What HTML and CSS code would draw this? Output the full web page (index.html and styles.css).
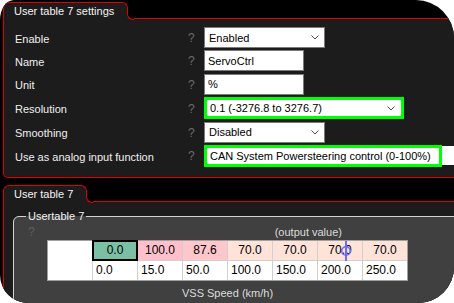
FILE: index.html
```html
<!DOCTYPE html>
<html lang="en">
<head>
  <meta charset="UTF-8" />
  <meta name="viewport" content="width=device-width, initial-scale=1.0" />
  <title>User table 7</title>
  <link rel="stylesheet" href="styles.css">
</head>
<body>
  <div class="window">

    <div class="tab">User table 7 settings</div>
    <div class="panel settings">
      <div class="row r23">
        <span class="label">Enable</span>
        <span class="help">?</span>
        <div class="combo short">Enabled <svg class="chev" width="8" height="5" viewBox="0 0 8 5"><polyline points="0.5,0.5 4,4 7.5,0.5"/></svg></div>
      </div>
      <div class="row r23">
        <span class="label">Name</span>
        <span class="help">?</span>
        <div class="field">ServoCtrl</div>
      </div>
      <div class="row r24">
        <span class="label">Unit</span>
        <span class="help">?</span>
        <div class="field">%</div>
      </div>
      <div class="row r24">
        <span class="label">Resolution</span>
        <span class="help">?</span>
        <div class="marked res">0.1 (-3276.8 to 3276.7) <svg class="chev" width="8" height="5" viewBox="0 0 8 5"><polyline points="0.5,0.5 4,4 7.5,0.5"/></svg></div>
      </div>
      <div class="row r24">
        <span class="label">Smoothing</span>
        <span class="help">?</span>
        <div class="combo short">Disabled <svg class="chev" width="8" height="5" viewBox="0 0 8 5"><polyline points="0.5,0.5 4,4 7.5,0.5"/></svg></div>
      </div>
      <div class="row r23">
        <span class="label">Use as analog input function</span>
        <span class="help">?</span>
        <div class="pair">
          <div class="marked func">CAN System Powersteering control (0-100%)</div>
          <div class="tail"></div>
        </div>
      </div>
    </div>

    <div class="tab second">User table 7</div>
    <div class="panel chart">
      <fieldset class="group">
        <legend>Usertable 7</legend>
        <div class="chart-head">
          <span class="help dim">?</span>
          <span class="axis-y">(output value)</span>
        </div>
        <div class="map">
          <div class="cell corner"></div>
          <div class="cell val sel">0.0</div>
          <div class="cell val hot">100.0</div>
          <div class="cell val hot2">87.6</div>
          <div class="cell val warm">70.0</div>
          <div class="cell val warm">70.0</div>
          <div class="cell val warm">70.0</div>
          <div class="cell val warm">70.0</div>
          <div class="cell axis">0.0</div>
          <div class="cell axis">15.0</div>
          <div class="cell axis">50.0</div>
          <div class="cell axis">100.0</div>
          <div class="cell axis">150.0</div>
          <div class="cell axis">200.0</div>
          <div class="cell axis">250.0</div>
          <!-- live value marker -->
          <svg class="marker" width="12" height="20" viewBox="0 0 12 20">
            <line x1="6" y1="0" x2="6" y2="20"/>
            <circle cx="6" cy="10" r="4.3"/>
          </svg>
        </div>
        <div class="axis-x">VSS Speed (km/h)</div>
      </fieldset>
    </div>

  </div>
</body>
</html>
```

FILE: styles.css
```css
* {
  box-sizing: border-box;
}

body {
  margin: 0;
  background: #fff;
  font-family: "Liberation Sans", Arial, sans-serif;
  font-size: 11px;
  color: #f0f0f0;
}

.window {
  width: 454px;
  height: 303px;
  overflow: hidden;
  background: #000;
  padding: 2px 0 0 3px;
  border-radius: 14px 38px 36px 28px / 20px 38px 36px 28px;
}

/* tabs */
.tab {
  position: relative;
  z-index: 1;
  display: inline-block;
  height: 17px;
  margin-bottom: -1px;
  padding: 0 13px 0 10px;
  border: 1px solid #e00000;
  border-bottom: 0;
  border-radius: 6px 6px 0 0;
  background: #1c1c1c;
  color: #f4f4f4;
  line-height: 16px;
  vertical-align: top;
}

.tab::before,
.tab::after {
  content: "";
  position: absolute;
  left: 100%;
  bottom: 0;
  width: 6px;
  height: 6px;
}

.tab::after {
  background: #1c1c1c;
}

.tab::before {
  z-index: 1;
  bottom: -1px;
  height: 7px;
  background: #000;
  border-left: 1px solid #e00000;
  border-bottom: 1px solid #e00000;
  border-bottom-left-radius: 6px;
}

.tab.second {
  margin-top: 7px;
}

.panel {
  width: 470px;
  background: #1c1c1c;
  border: 1px solid #e00000;
  border-right: 0;
}

/* settings panel */
.settings {
  height: 160px;
  padding: 7px 0 0 11px;
  border-bottom-left-radius: 5px;
}

.row {
  display: grid;
  grid-template-columns: 173px 16px auto;
  align-items: center;
}

.r23 { height: 23px; }
.r24 { height: 24px; }

.label {
  padding-top: 2px;
  color: #f0f0f0;
}

.help {
  padding-top: 1px;
  font-size: 12px;
  color: #6c6c6c;
}

.combo,
.field,
.marked {
  display: flex;
  align-items: center;
  background: #fff;
  color: #000;
  white-space: nowrap;
}

.combo {
  justify-content: space-between;
  width: 121px;
  height: 21px;
  padding: 0 5px 0 4px;
  border: 1px solid #7a7a7a;
}

.field {
  width: 100px;
  height: 21px;
  padding-left: 3px;
  border: 1px solid #7a7a7a;
}

.marked {
  height: 22px;
  border: 3px solid #00ff00;
  padding-left: 3px;
}

.res {
  justify-content: space-between;
  width: 200px;
  padding-right: 6px;
}

.func {
  width: 238px;
}

.pair {
  display: flex;
  align-items: center;
}

.tail {
  width: 30px;
  height: 19px;
  background: #fff;
}

.chev polyline {
  fill: none;
  stroke: #4a4a4a;
  stroke-width: 1;
}

/* table panel */
.chart {
  height: 120px;
  padding: 7px 0 0 9px;
}

.group {
  margin: 0;
  padding: 0;
  min-width: 0;
  width: 460px;
  height: 110px;
  background: #404040;
  border: 1px solid #d4d4d4;
  border-radius: 6px 0 0 0;
}

.group legend {
  margin-left: 12px;
  padding: 0 2px;
  line-height: 14px;
  color: #f2f2f2;
}

.chart-head {
  display: flex;
  align-items: center;
  height: 17px;
  padding-left: 14px;
}

.help.dim {
  color: #5e5e5e;
}

.axis-y {
  margin-left: 240px;
  color: #dcdcdc;
}

.map {
  position: relative;
  display: grid;
  grid-template-columns: repeat(8, 44px);
  grid-auto-rows: 19px;
  gap: 1px;
  width: max-content;
  margin-left: 33px;
  background: #d0d0d0;
  border: 1px solid #a0a0a0;
}

.cell {
  background: #fff;
  color: #000;
  font-size: 12px;
  line-height: 19px;
  white-space: nowrap;
}

.corner {
  grid-row: span 2;
}

.val {
  text-align: center;
}

.axis {
  padding-left: 3px;
}

.sel {
  position: relative;
  z-index: 1;
  background: #7bc0a4;
  box-shadow: 0 0 0 1px #000, inset 0 0 0 1px #000;
}

.hot { background: #ffc0cb; }
.hot2 { background: #ffc6cc; }
.warm { background: #ffe3d9; }

.marker {
  position: absolute;
  left: 292px;
  top: 0;
  z-index: 2;
}

.marker line {
  stroke: #6b6bff;
  stroke-width: 2;
}

.marker circle {
  fill: none;
  stroke: #6b6bff;
  stroke-width: 1.6;
}

.axis-x {
  width: 361px;
  margin: 2px 0 0 33px;
  line-height: 20px;
  text-align: center;
  color: #dcdcdc;
}
```
